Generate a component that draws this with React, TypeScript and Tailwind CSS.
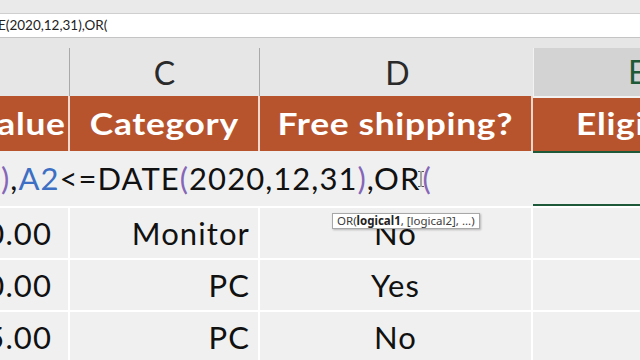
const cols = "grid grid-cols-[70px_190px_273px_1fr]";

function Paren({ c }: { c: string }) {
  return <span className="text-[#8566b8]">{c}</span>;
}

function IBeam() {
  return (
    <svg width="6" height="16" viewBox="0 0 6 16" className="inline-block align-middle -mx-[2px]">
      <path d="M0 0.5h2.5M3.5 0.5H6M3 1v14M0 15.5h2.5M3.5 15.5H6" stroke="#555" strokeWidth="1" fill="none" />
    </svg>
  );
}

export default function App() {
  const rows = [
    { b: "0.00", c: "Monitor", d: "No" },
    { b: "0.00", c: "PC", d: "Yes" },
    { b: "5.00", c: "PC", d: "No" },
  ];

  return (
    <div className="relative w-[640px] h-[360px] overflow-hidden bg-[#f0f0f0] font-['Lato',sans-serif] text-[#111]">
      {/* ribbon edge */}
      <div className="h-[14px] bg-[#eaeaea] border-b border-[#cfcfcf]" />
      {/* formula bar */}
      <div className="h-[24px] bg-white border-b border-[#c4c4c4] flex items-center text-[13.5px] text-[#222]">
        <span className="-ml-[2px]">E(2020,12,31),OR(</span>
      </div>
      {/* column letters */}
      <div className="h-[10px] bg-[#e6e6e6]" />
      <div className={`${cols} h-[48px] bg-[#e6e6e6] text-[32px] text-[#2a2a2a]`}>
        <div className="border-r border-[#a9a9a9]" />
        <div className="border-r border-[#a9a9a9] flex items-center justify-center">C</div>
        <div className="flex items-center justify-center pl-[2px]">D</div>
        <div className="bg-[#d3d3d3] border-b-2 border-[#1e6540] flex items-center pl-[94px] text-[#1e5a3a] border-l border-[#f2f2f2]">
          E
        </div>
      </div>
      {/* table header */}
      <div className={`${cols} h-[55px] bg-[#b8542d] text-white font-bold text-[31px] tracking-[0.6px]`}>
        <div className="border-r-2 border-[#f0d8cc] flex items-center justify-end overflow-hidden whitespace-nowrap">
          <span className="inline-block scale-x-[1.14] origin-right pr-[2px]">alue</span>
        </div>
        <div className="border-r-2 border-[#f0d8cc] flex items-center justify-center">
          <span className="inline-block scale-x-[1.14]">Category</span>
        </div>
        <div className="border-r-2 border-[#f0d8cc] flex items-center justify-center whitespace-nowrap">
          <span className="inline-block scale-x-[1.14]">Free shipping?</span>
        </div>
        <div className="flex items-center pl-[43px] whitespace-nowrap overflow-hidden">
          <span className="inline-block scale-x-[1.14] origin-left">Eligi</span>
        </div>
      </div>
      {/* editing row */}
      <div className={`${cols} h-[55px]`}>
        <div className="col-span-3 flex items-center text-[31px] whitespace-nowrap tracking-[1.05px] pl-[1px]">
          <Paren c=")" />,<span className="text-[#3d6fc4]">A2</span>&lt;=DATE<Paren c="(" />2020,12,31
          <Paren c=")" />,OR
          <IBeam />
          <Paren c="(" />
        </div>
        <div className="border-t-2 border-b-2 border-[#1e5a3a]" />
      </div>
      {/* data rows */}
      {rows.map((r, i) => (
        <div key={i} className={`${cols} h-[52px] border-t-2 border-white text-[31px] tracking-[1.1px]`}>
          <div className="border-r-2 border-white flex items-center justify-end pr-[16px] whitespace-nowrap">{r.b}</div>
          <div className="border-r-2 border-white flex items-center justify-end pr-[8px]">{r.c}</div>
          <div className="border-r-2 border-white flex items-center justify-center">{r.d}</div>
          <div />
        </div>
      ))}
      {/* function tooltip */}
      <div className="absolute left-[332px] top-[213px] h-[16px] px-[4px] flex items-center bg-white border border-[#a8a8a8] shadow-[1px_1px_2px_rgba(0,0,0,0.25)] text-[11.5px] text-[#3c3c3c] font-['Noto_Sans',sans-serif] whitespace-nowrap">
        OR(<b className="font-bold text-[#222]">logical1</b>, [logical2], ...)
      </div>
    </div>
  );
}
